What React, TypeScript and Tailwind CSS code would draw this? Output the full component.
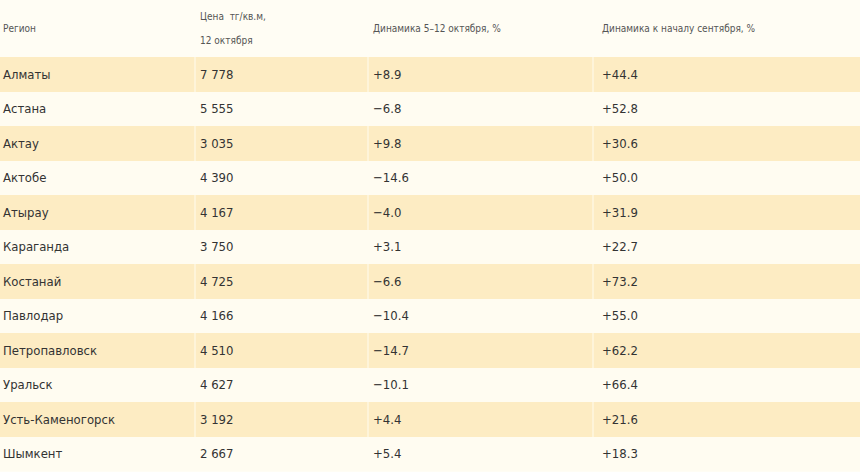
const rows = [
  ["Алматы", "7 778", "+8.9", "+44.4"],
  ["Астана", "5 555", "\u22126.8", "+52.8"],
  ["Актау", "3 035", "+9.8", "+30.6"],
  ["Актобе", "4 390", "\u221214.6", "+50.0"],
  ["Атырау", "4 167", "\u22124.0", "+31.9"],
  ["Караганда", "3 750", "+3.1", "+22.7"],
  ["Костанай", "4 725", "\u22126.6", "+73.2"],
  ["Павлодар", "4 166", "\u221210.4", "+55.0"],
  ["Петропавловск", "4 510", "\u221214.7", "+62.2"],
  ["Уральск", "4 627", "\u221210.1", "+66.4"],
  ["Усть-Каменогорск", "3 192", "+4.4", "+21.6"],
  ["Шымкент", "2 667", "+5.4", "+18.3"],
];

const cols = "grid grid-cols-[194px_171px_223px_1fr] gap-x-[2px]";

export default function App() {
  return (
    <div className="w-[860px] h-[472px] overflow-hidden bg-[#fffdf4] text-[#333] font-['DejaVu_Sans_Condensed','DejaVu_Sans',sans-serif]">
      <div className={`${cols} h-[57px] items-center text-[10px] text-[#555]`}>
        <div className="pl-[3px]">Регион</div>
        <div className="pl-[4px] leading-[24px]">
          <div>Цена&nbsp;&nbsp;тг/кв.м,</div>
          <div>12 октября</div>
        </div>
        <div className="pl-[4px]">Динамика 5–12 октября, %</div>
        <div className="pl-[8px]">Динамика к началу сентября, %</div>
      </div>
      {rows.map((r, i) => (
        <div
          key={r[0]}
          className={`${cols} h-[34.5px] text-[13px] ${i % 2 === 0 ? "bg-[#fef4d9]" : "bg-[#fffcf1]"}`}
        >
          {r.map((c, j) => (
            <div
              key={j}
              className={`flex items-center ${i % 2 === 0 ? "bg-[#fdecc3]" : "bg-[#fffcf1]"} ${j === 0 ? "pl-[3px]" : j === 3 ? "pl-[8px]" : "pl-[4px]"}`}
            >
              {c}
            </div>
          ))}
        </div>
      ))}
    </div>
  );
}
